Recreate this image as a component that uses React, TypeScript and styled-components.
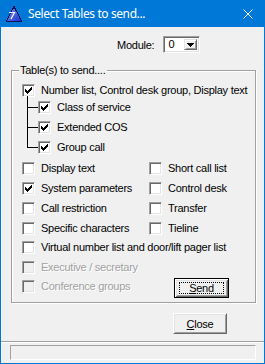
import React from "react";
import styled, { createGlobalStyle, css } from "styled-components";

const Global = createGlobalStyle`
  html, body { margin: 0; padding: 0; background: #f0f0f0; }
  * { box-sizing: border-box; }
`;

const Window = styled.div`
  width: 265px;
  height: 364px;
  border: 1px solid #0078d7;
  background: #f0f0f0;
  display: flex;
  flex-direction: column;
  font-family: "Liberation Sans", Arial, sans-serif;
  font-size: 11px;
  letter-spacing: -0.25px;
  color: #000;
`;

const TitleBar = styled.div`
  height: 26px;
  background: #0078d7;
  display: flex;
  align-items: center;
  padding-left: 5px;
  color: #fff;
  font-family: "Noto Sans", "Open Sans", sans-serif;
  font-size: 12px;
  letter-spacing: -0.4px;
`;

const TitleText = styled.span`
  margin-left: 6px;
  flex: 1;
  line-height: 16px;
`;

const CloseGlyph = styled.svg`
  margin-right: 11px;
  display: block;
`;

const Body = styled.div`
  flex: 1;
  display: flex;
  flex-direction: column;
`;

const ModuleRow = styled.div`
  margin-top: 9px;
  padding-left: 116px;
  display: flex;
  align-items: center;
  height: 17px;
  gap: 9px;
`;

const Combo = styled.div`
  width: 37px;
  height: 17px;
  border: 1px solid;
  border-color: #a0a0a0 #fff #fff #a0a0a0;
  box-shadow: inset 1px 1px 0 #696969, inset -1px -1px 0 #e3e3e3;
  background: #fff;
  display: flex;
  align-items: stretch;
  padding: 2px;
`;

const ComboValue = styled.span`
  flex: 1;
  padding-left: 2px;
  line-height: 11px;
`;

const ComboButton = styled.span`
  width: 13px;
  background: #f0f0f0;
  border: 1px solid;
  border-color: #e3e3e3 #696969 #696969 #e3e3e3;
  box-shadow: inset 1px 1px 0 #fff, inset -1px -1px 0 #a0a0a0;
  display: flex;
  align-items: center;
  justify-content: center;
`;

const GroupBox = styled.div`
  position: relative;
  margin: 17px 8px 0 10px;
  height: 233px;
  border: 1px solid #a0a0a0;
  box-shadow: 1px 1px 0 #fff, inset 1px 1px 0 #fff;
  padding: 13px 0 0 10px;
  display: flex;
  flex-direction: column;
`;

const Legend = styled.span`
  position: absolute;
  top: -7px;
  left: 7px;
  padding: 0 1px;
  background: #f0f0f0;
  line-height: 13px;
`;

const Row = styled.div<{ $mt?: number }>`
  display: flex;
  align-items: center;
  gap: 6px;
  height: 13px;
  line-height: 13px;
  white-space: nowrap;
  margin-top: ${(p) => (p.$mt ?? 0)}px;
`;

const TreeGroup = styled.div`
  display: flex;
  flex-direction: column;
  padding-left: 16px;
`;

const TreeRow = styled(Row)<{ $first?: boolean }>`
  position: relative;
  &::before {
    content: "";
    position: absolute;
    left: -11px;
    bottom: 6px;
    width: 10px;
    height: ${(p) => (p.$first ? 11 : 20)}px;
    border-left: 1px solid #000;
    border-bottom: 1px solid #000;
  }
`;

const Grid = styled.div`
  display: grid;
  grid-template-columns: 127px 1fr;
  row-gap: 7px;
  margin-top: 8px;
`;

const Box = styled.span<{ $disabled?: boolean }>`
  width: 13px;
  height: 13px;
  flex: none;
  border: 1px solid;
  border-color: #a0a0a0 #fff #fff #a0a0a0;
  box-shadow: inset 1px 1px 0 #696969, inset -1px -1px 0 #e3e3e3;
  background: ${(p) => (p.$disabled ? "#f0f0f0" : "#fff")};
  display: flex;
  padding: 2px 0 0 2px;
`;

const Label = styled.span<{ $disabled?: boolean }>`
  ${(p) =>
    p.$disabled &&
    css`
      color: #a0a0a0;
      text-shadow: 1px 1px 0 #fff;
    `}
`;

const LastRow = styled.div`
  display: flex;
  align-items: flex-start;
  margin-top: 4px;
  padding-right: 26px;
`;

const LastItem = styled(Row)`
  margin-top: 2px;
`;

const Button = styled.button<{ $default?: boolean }>`
  font-family: "Liberation Sans", Arial, sans-serif;
  font-size: 11px;
  letter-spacing: -0.25px;
  color: #000;
  background: #f0f0f0;
  width: ${(p) => (p.$default ? 55 : 54)}px;
  height: ${(p) => (p.$default ? 20 : 21)}px;
  padding: 0;
  margin: 0;
  border: 1px solid;
  border-color: #fff #696969 #696969 #fff;
  box-shadow: inset 1px 1px 0 #e3e3e3, inset -1px -1px 0 #a0a0a0;
  display: flex;
  align-items: center;
  justify-content: center;
  ${(p) =>
    p.$default &&
    css`
      margin-left: auto;
      border-color: #000;
      box-shadow: inset 1px 1px 0 #fff, inset -1px -1px 0 #696969,
        inset 2px 2px 0 #e3e3e3, inset -2px -2px 0 #a0a0a0;
    `}
`;

const Focus = styled.span`
  border: 1px dotted #000;
  width: 45px;
  height: 12px;
  display: flex;
  align-items: center;
  justify-content: center;
  line-height: 12px;
`;

const Mnemonic = styled.span`
  text-decoration: underline;
`;

const CloseRow = styled.div`
  margin-top: 10px;
  padding-left: 172px;
  display: flex;
`;

const Separator = styled.div`
  margin-top: 7px;
  height: 2px;
  border-top: 1px solid #a0a0a0;
  border-bottom: 1px solid #fff;
`;

const StatusPanel = styled.div`
  margin: 2px 8px 0 9px;
  height: 15px;
  border: 1px solid;
  border-color: #a0a0a0 #fff #fff #a0a0a0;
`;

const Check = () => (
  <svg width="7" height="7" viewBox="0 0 7 7" shapeRendering="crispEdges">
    <g fill="#000">
      <rect x="6" y="0" width="1" height="1" />
      <rect x="5" y="1" width="2" height="1" />
      <rect x="0" y="2" width="1" height="1" />
      <rect x="4" y="2" width="3" height="1" />
      <rect x="0" y="3" width="2" height="1" />
      <rect x="3" y="3" width="3" height="1" />
      <rect x="0" y="4" width="5" height="1" />
      <rect x="1" y="5" width="3" height="1" />
      <rect x="2" y="6" width="1" height="1" />
    </g>
  </svg>
);

const CheckBox = ({ checked, disabled }: { checked?: boolean; disabled?: boolean }) => (
  <Box $disabled={disabled}>{checked && <Check />}</Box>
);

const Item = ({ label, checked, disabled }: { label: string; checked?: boolean; disabled?: boolean }) => (
  <>
    <CheckBox checked={checked} disabled={disabled} />
    <Label $disabled={disabled}>{label}</Label>
  </>
);

const AppIcon = () => (
  <svg width="16" height="16" viewBox="0 0 16 16" shapeRendering="crispEdges">
    <defs>
      <linearGradient id="tri" x1="0" y1="0" x2="1" y2="1">
        <stop offset="0" stopColor="#7f9bff" />
        <stop offset="1" stopColor="#1a2fc8" />
      </linearGradient>
    </defs>
    <polygon points="8,0.5 15.5,15 0.5,15" fill="url(#tri)" stroke="#101050" strokeWidth="1" />
    <path d="M3 6.5 H8.5 L5 13" stroke="#fff" strokeWidth="1.2" fill="none" shapeRendering="geometricPrecision" />
  </svg>
);

export default function App() {
  return (
    <>
      <Global />
      <Window>
        <TitleBar>
          <AppIcon />
          <TitleText>Select Tables to send...</TitleText>
          <CloseGlyph width="10" height="10" viewBox="0 0 10 10">
            <path d="M0.5 0.5 L9.5 9.5 M9.5 0.5 L0.5 9.5" stroke="#fff" strokeWidth="1" />
          </CloseGlyph>
        </TitleBar>
        <Body>
          <ModuleRow>
            <span>Module:</span>
            <Combo>
              <ComboValue>0</ComboValue>
              <ComboButton>
                <svg width="7" height="4" viewBox="0 0 7 4" shapeRendering="crispEdges">
                  <polygon points="0,0 7,0 3.5,4" fill="#000" />
                </svg>
              </ComboButton>
            </Combo>
          </ModuleRow>
          <GroupBox>
            <Legend>Table(s) to send....</Legend>
            <Row>
              <Item label="Number list, Control desk group, Display text" checked />
            </Row>
            <TreeGroup>
              <TreeRow $first $mt={4}>
                <Item label="Class of service" checked />
              </TreeRow>
              <TreeRow $mt={7}>
                <Item label="Extended COS" checked />
              </TreeRow>
              <TreeRow $mt={7}>
                <Item label="Group call" checked />
              </TreeRow>
            </TreeGroup>
            <Grid>
              <Row><Item label="Display text" /></Row>
              <Row><Item label="Short call list" /></Row>
              <Row><Item label="System parameters" checked /></Row>
              <Row><Item label="Control desk" /></Row>
              <Row><Item label="Call restriction" /></Row>
              <Row><Item label="Transfer" /></Row>
              <Row><Item label="Specific characters" /></Row>
              <Row><Item label="Tieline" /></Row>
            </Grid>
            <Row $mt={6}>
              <Item label="Virtual number list and door/lift pager list" />
            </Row>
            <Row $mt={7}>
              <Item label="Executive / secretary" disabled />
            </Row>
            <LastRow>
              <LastItem>
                <Item label="Conference groups" disabled />
              </LastItem>
              <Button $default>
                <Focus>
                  <span><Mnemonic>S</Mnemonic>end</span>
                </Focus>
              </Button>
            </LastRow>
          </GroupBox>
          <CloseRow>
            <Button>
              <span><Mnemonic>C</Mnemonic>lose</span>
            </Button>
          </CloseRow>
          <Separator />
          <StatusPanel />
        </Body>
      </Window>
    </>
  );
}
